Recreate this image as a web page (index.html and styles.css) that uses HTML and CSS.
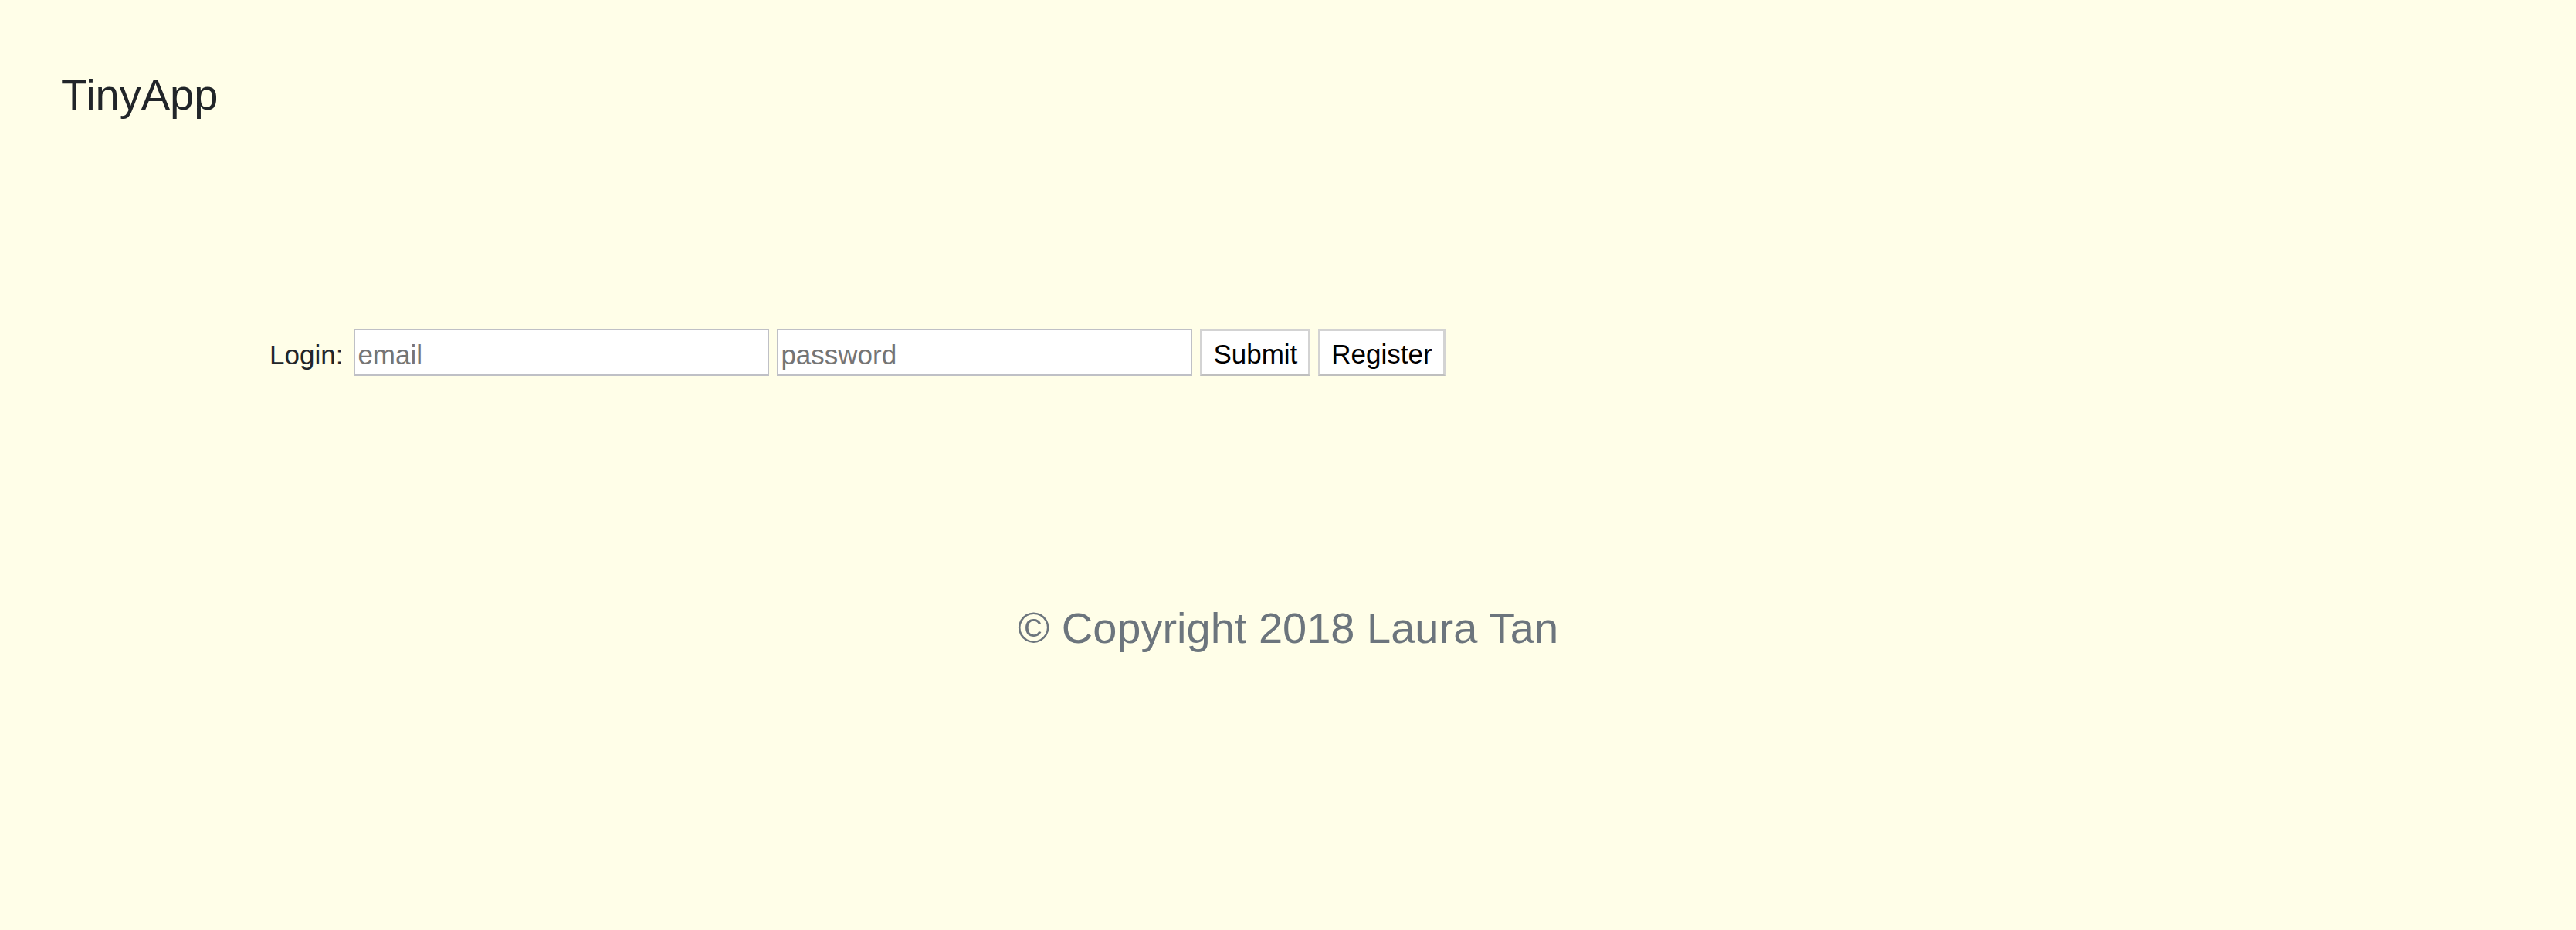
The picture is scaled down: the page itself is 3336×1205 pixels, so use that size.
FILE: index.html
```html
<!DOCTYPE html>
<html lang="en">
<head>
<meta charset="utf-8">
<title>TinyApp</title>
<link rel="stylesheet" href="styles.css">
</head>
<body>
<header class="navbar">
  <a class="brand" href="#">TinyApp</a>
</header>
<main class="content">
  <form class="login-form">
    <label class="login-label" for="email">Login:</label>
    <input class="field" id="email" type="email" placeholder="email">
    <input class="field" type="password" placeholder="password">
    <button class="btn" type="submit">Submit</button>
    <button class="btn" type="button">Register</button>
  </form>
</main>
<footer class="footer">
  <p class="copyright">© Copyright 2018 Laura Tan</p>
</footer>
</body>
</html>
```

FILE: styles.css
```css
html, body {
  margin: 0;
  padding: 0;
}

body {
  background: #fffee8;
  font-family: "Liberation Sans", Arial, sans-serif;
  color: #212529;
  min-height: 1205px;
}

.navbar {
  padding: 95px 0 0 79px;
}

.brand {
  display: inline-block;
  font-size: 56px;
  line-height: 1;
  color: #212529;
  text-decoration: none;
}

.content {
  padding: 275px 0 0 349px;
}

.login-form {
  display: flex;
  align-items: center;
  gap: 10px;
  height: 61px;
}

.login-label {
  font-size: 35px;
  line-height: 1;
  padding-top: 6px;
  margin-right: 4px;
  color: #212529;
}

.field {
  box-sizing: border-box;
  width: 538px;
  height: 61px;
  margin: 0;
  padding: 7px 3px 0 3px;
  border: 2px solid #bfc0c6;
  border-radius: 0;
  background: #ffffff;
  font-family: "Liberation Sans", Arial, sans-serif;
  font-size: 35px;
  color: #212529;
  outline: none;
}

.field::placeholder {
  color: #757575;
}

.btn {
  box-sizing: border-box;
  height: 61px;
  margin: 0;
  padding: 4px 14px 0 14px;
  border: 3px solid #d3d3d3;
  border-bottom-color: #bfbfbf;
  border-radius: 0;
  background: #ffffff;
  font-family: "Liberation Sans", Arial, sans-serif;
  font-size: 35px;
  color: #000000;
  cursor: pointer;
}

.footer {
  padding-top: 299px;
}

.copyright {
  margin: 0;
  text-align: center;
  font-size: 56px;
  line-height: 1;
  color: #6c757d;
}
```
